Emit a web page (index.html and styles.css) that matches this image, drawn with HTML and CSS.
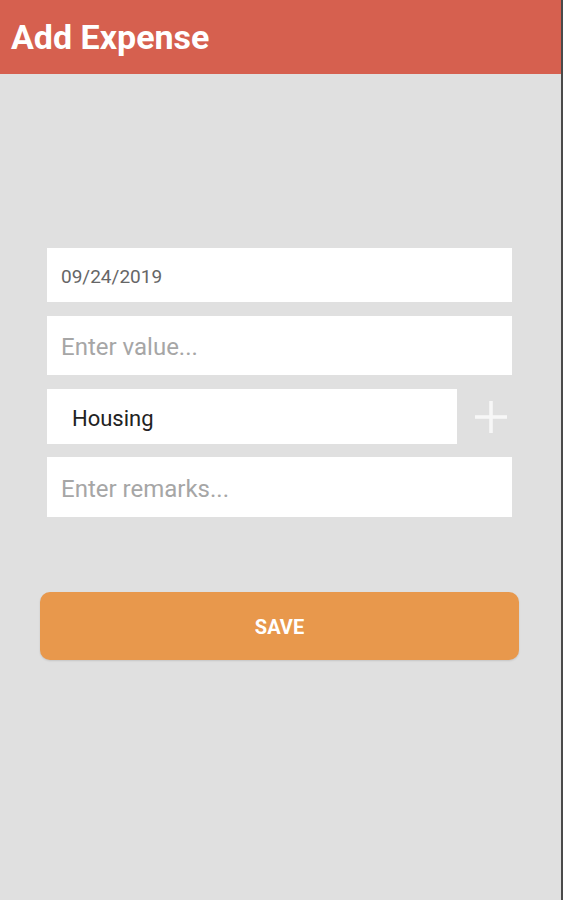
FILE: index.html
```html
<!DOCTYPE html>
<html lang="en">
<head>
    <meta charset="UTF-8">
    <meta name="viewport" content="width=device-width, initial-scale=1.0">
    <title>Add Expense</title>
    <link rel="stylesheet" href="styles.css">
</head>
<body>
    <div class="screen">
        <header class="app-bar">
            <h1 class="title">Add Expense</h1>
        </header>

        <main class="form">
            <div class="field field-date">09/24/2019</div>
            <div class="field field-value placeholder">Enter value...</div>
            <div class="category-row">
                <div class="field field-category">Housing</div>
                <button class="add-btn" aria-label="Add category">
                    <svg width="34" height="34" viewBox="0 0 34 34">
                        <path d="M17 1 V33 M1 17 H33" stroke="#f7f7f7" stroke-width="3.5" fill="none"/>
                    </svg>
                </button>
            </div>
            <div class="field field-remarks placeholder">Enter remarks...</div>

            <button class="save-btn">SAVE</button>
        </main>
    </div>
</body>
</html>
```

FILE: styles.css
```css
body {
    margin: 0;
    background-color: #e0e0e0;
    font-family: Roboto, "Noto Sans", Arial, sans-serif;
}

.screen {
    min-height: 900px;
    box-sizing: border-box;
    border-right: 2px solid #4a4a4a;
    background-color: #e0e0e0;
}

.app-bar {
    height: 74px;
    background-color: #d6604f;
    display: flex;
    align-items: center;
    padding: 0 11px;
}

.title {
    margin: 0;
    color: #fff;
    font-size: 34px;
    font-weight: bold;
}

.form {
    display: flex;
    flex-direction: column;
    padding: 174px 49px 0 47px;
}

.field {
    background-color: #fff;
    display: flex;
    align-items: center;
    box-sizing: border-box;
    padding: 3px 0 0 14px;
    color: #222;
}

.placeholder {
    color: #a6a6a6;
}

.field-date {
    height: 54px;
    font-size: 19px;
    color: #666;
}

.field-value {
    height: 59px;
    margin-top: 14px;
    font-size: 24px;
}

.category-row {
    display: flex;
    align-items: center;
    margin-top: 14px;
}

.field-category {
    flex: 0 0 410px;
    height: 55px;
    padding-left: 25px;
    font-size: 22px;
}

.add-btn {
    flex: 1;
    height: 55px;
    border: none;
    background: none;
    padding: 0 0 0 12px;
    display: flex;
    align-items: center;
    justify-content: center;
}

.field-remarks {
    height: 60px;
    margin-top: 13px;
    font-size: 24px;
}

.save-btn {
    margin: 75px -7px 0 -7px;
    height: 68px;
    padding-top: 3px;
    border: none;
    border-radius: 10px;
    background-color: #e8984c;
    color: #fff;
    font-family: Roboto, "Noto Sans", Arial, sans-serif;
    font-size: 20px;
    font-weight: bold;
    box-shadow: 0 1px 2px rgba(0, 0, 0, 0.12);
}
```
